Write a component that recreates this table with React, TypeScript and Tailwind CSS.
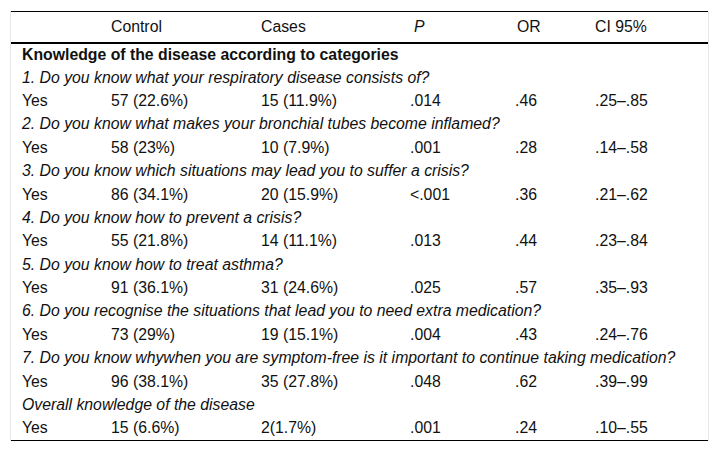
import React from "react";

const rows: { q: string; v: string[] }[] = [
  { q: "1. Do you know what your respiratory disease consists of?", v: ["57 (22.6%)", "15 (11.9%)", ".014", ".46", ".25–.85"] },
  { q: "2. Do you know what makes your bronchial tubes become inflamed?", v: ["58 (23%)", "10 (7.9%)", ".001", ".28", ".14–.58"] },
  { q: "3. Do you know which situations may lead you to suffer a crisis?", v: ["86 (34.1%)", "20 (15.9%)", "<.001", ".36", ".21–.62"] },
  { q: "4. Do you know how to prevent a crisis?", v: ["55 (21.8%)", "14 (11.1%)", ".013", ".44", ".23–.84"] },
  { q: "5. Do you know how to treat asthma?", v: ["91 (36.1%)", "31 (24.6%)", ".025", ".57", ".35–.93"] },
  { q: "6. Do you recognise the situations that lead you to need extra medication?", v: ["73 (29%)", "19 (15.1%)", ".004", ".43", ".24–.76"] },
  { q: "7. Do you know whywhen you are symptom-free is it important to continue taking medication?", v: ["96 (38.1%)", "35 (27.8%)", ".048", ".62", ".39–.99"] },
  { q: "Overall knowledge of the disease", v: ["15 (6.6%)", "2(1.7%)", ".001", ".24", ".10–.55"] },
];

export default function App() {
  return (
    <div className="min-h-screen bg-white pl-[10px] pt-[11px] text-[15.8px] leading-[18px] text-[#111] [font-family:'Liberation_Sans',Arial,sans-serif]">
      <div className="w-[699px] border-x border-[#e6e6e6]">
        <table className="w-[697px] table-fixed border-collapse border-t border-black">
          <colgroup>
            <col className="w-[100px]" />
            <col className="w-[150px]" />
            <col className="w-[149px]" />
            <col className="w-[105px]" />
            <col className="w-[80px]" />
            <col className="w-[113px]" />
          </colgroup>
          <thead>
            <tr className="h-[31px] border-b-2 border-black text-left">
              <th className="pl-[11px] font-normal"></th>
              <th className="font-normal">Control</th>
              <th className="font-normal">Cases</th>
              <th className="pl-[4px] font-normal italic">P</th>
              <th className="pl-[2px] font-normal">OR</th>
              <th className="font-normal">CI 95%</th>
            </tr>
          </thead>
          <tbody className="border-b border-black">
            <tr className="h-[23.4px]">
              <td colSpan={6} className="pl-[11px] font-bold">
                Knowledge of the disease according to categories
              </td>
            </tr>
            {rows.map((r) => (
              <React.Fragment key={r.q}>
                <tr className="h-[23.4px]">
                  <td colSpan={6} className="pl-[11px] whitespace-nowrap italic">
                    {r.q}
                  </td>
                </tr>
                <tr className="h-[23.4px]">
                  <td className="pl-[11px]">Yes</td>
                  {r.v.map((x, i) => (
                    <td key={i}>{x}</td>
                  ))}
                </tr>
              </React.Fragment>
            ))}
          </tbody>
        </table>
      </div>
    </div>
  );
}
